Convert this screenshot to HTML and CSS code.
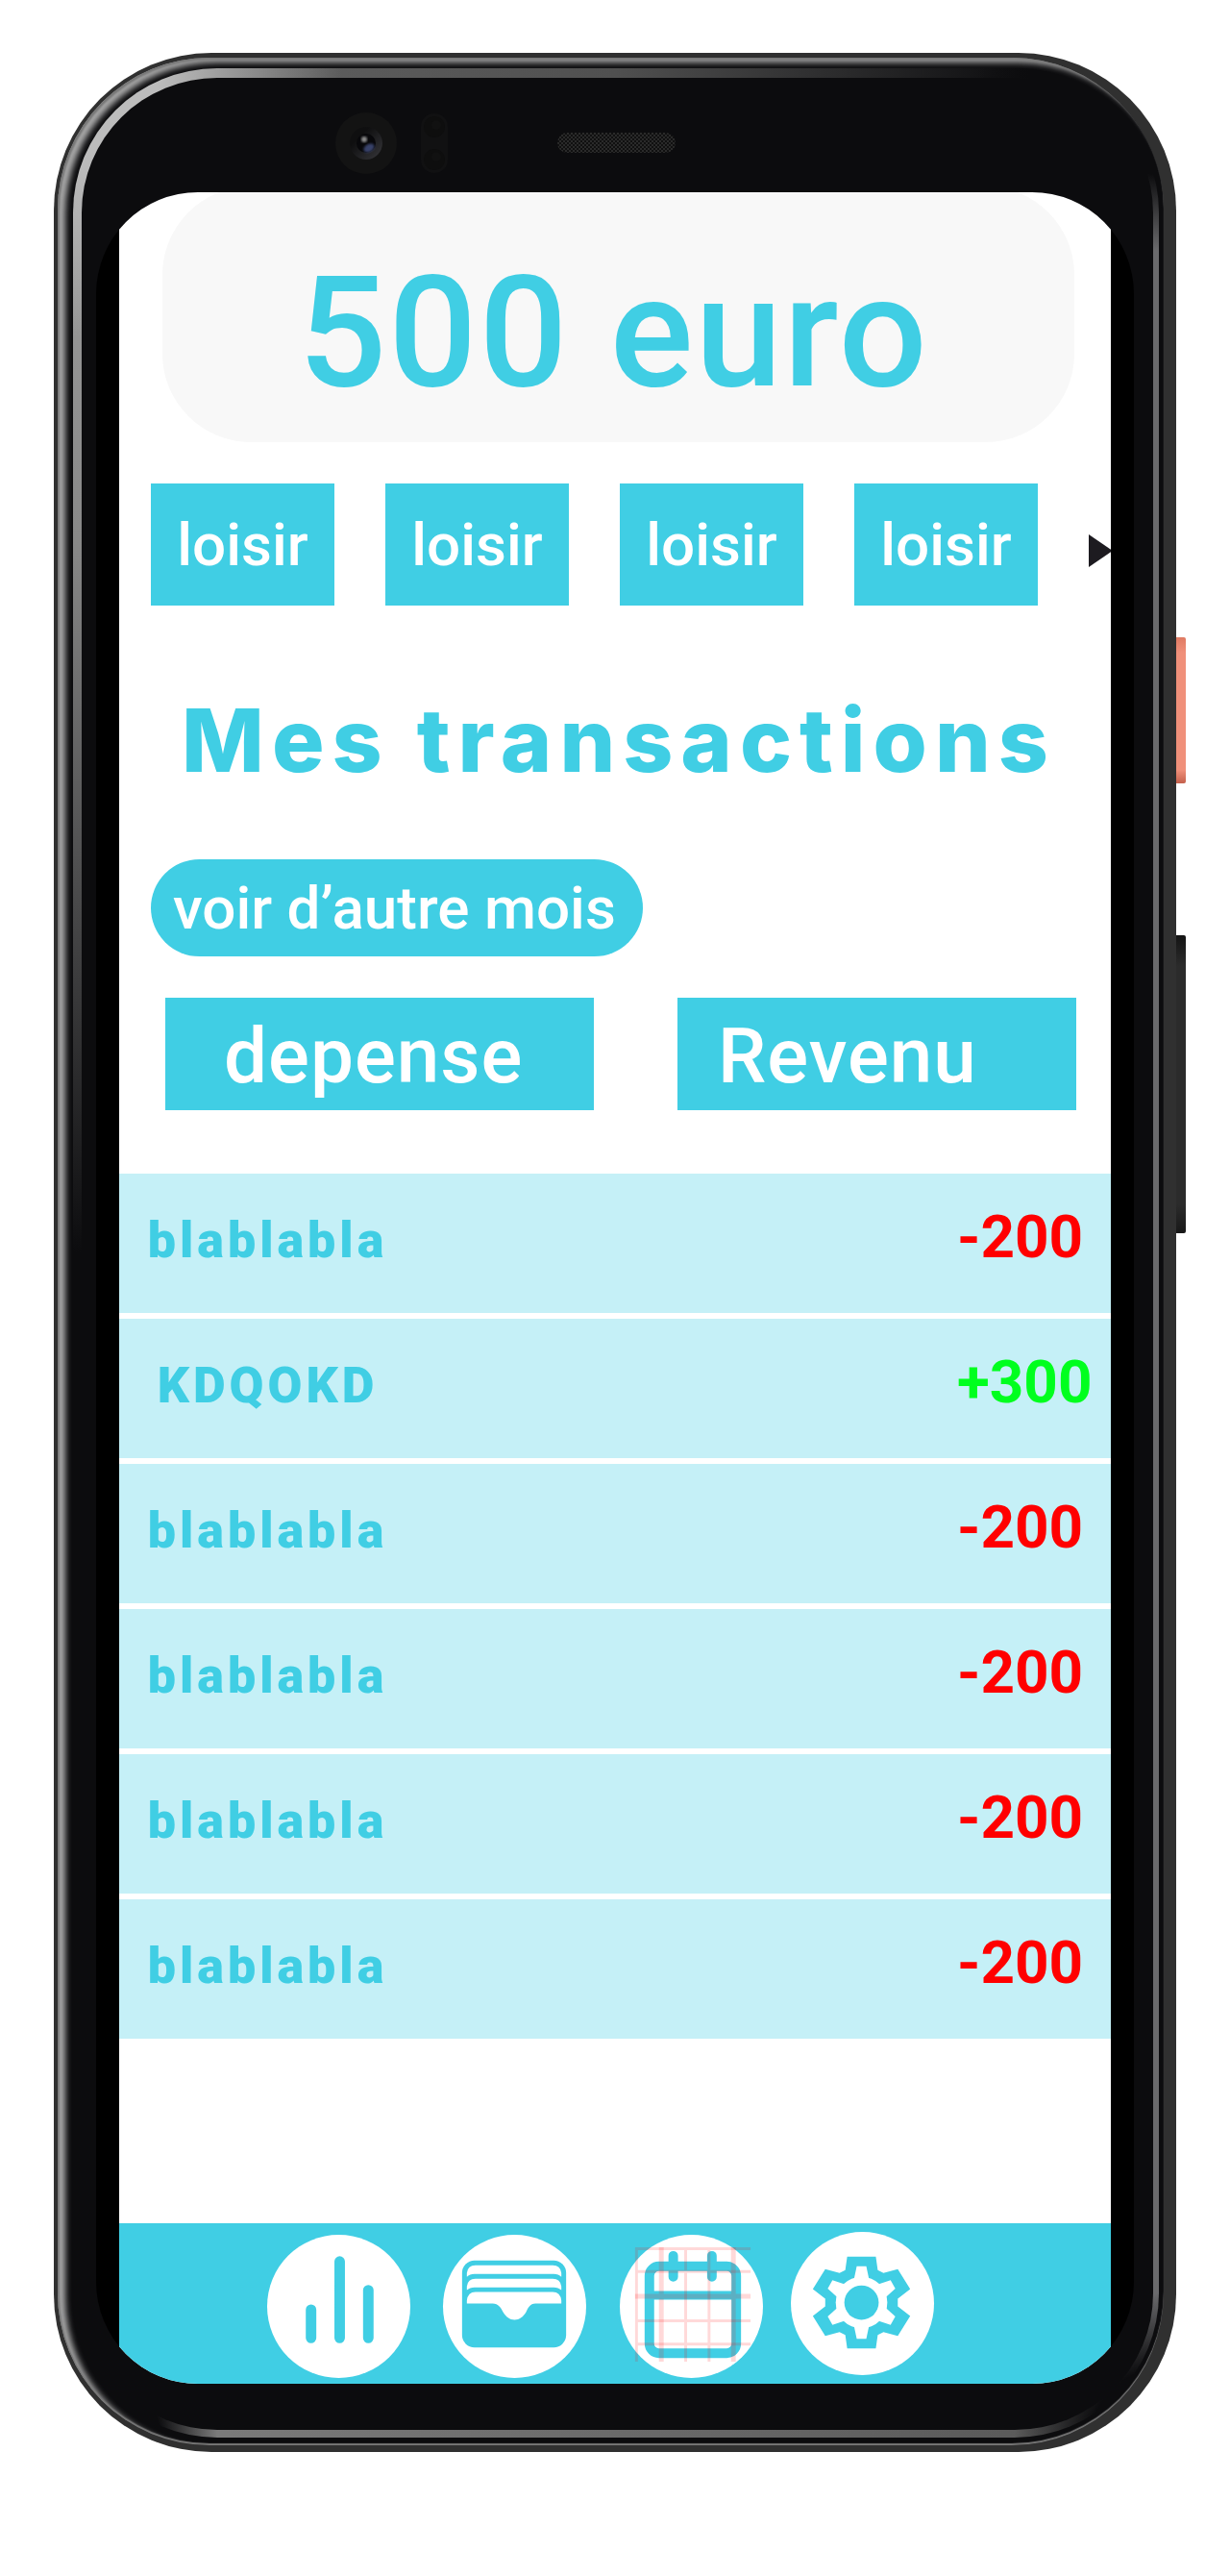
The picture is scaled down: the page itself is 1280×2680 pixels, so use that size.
FILE: index.html
```html
<!DOCTYPE html>
<html lang="fr">
<head>
  <meta charset="utf-8">
  <meta name="viewport" content="width=device-width, initial-scale=1">
  <title>Mes transactions</title>
  <link rel="stylesheet" href="styles.css">
</head>
<body>
  <div class="phone">
    <span class="side-button side-button--power"></span>
    <span class="side-button side-button--volume"></span>
    <div class="rim">
      <div class="face">
        <div class="sensors">
          <div class="sensors__left">
            <svg width="64" height="64" viewBox="0 0 64 64" aria-hidden="true">
              <defs>
                <linearGradient id="lens" x1="0" y1="0" x2="1" y2="1">
                  <stop offset=".3" stop-color="#0f0f10"/>
                  <stop offset="1" stop-color="#38383c"/>
                </linearGradient>
                <filter id="soft"><feGaussianBlur stdDeviation="1"/></filter>
              </defs>
              <circle cx="32" cy="32" r="32" fill="#131313"/>
              <circle cx="32" cy="32" r="17" fill="url(#lens)"/>
              <circle cx="32" cy="32" r="10" fill="#08080b"/>
              <ellipse cx="35" cy="37" rx="6" ry="4" fill="#39436a" filter="url(#soft)" transform="rotate(-30 35 37)"/>
              <circle cx="30" cy="28" r="3" fill="#8a8a8a" filter="url(#soft)"/>
            </svg>
            <svg width="28" height="62" viewBox="0 0 28 62" aria-hidden="true">
              <rect width="28" height="62" rx="14" fill="#111112"/>
              <circle cx="14" cy="14" r="11" fill="#0e0e0e"/>
              <circle cx="14" cy="48" r="11" fill="#0e0e0e"/>
              <circle cx="16" cy="12" r="5" fill="#111"/>
              <circle cx="16" cy="45" r="5" fill="#111"/>
            </svg>
          </div>
          <div class="speaker"></div>
        </div>
        <div class="screen">
          <div class="app">
            <p class="balance">500 euro</p>

            <div class="categories">
              <button class="chip" type="button">loisir</button>
              <button class="chip" type="button">loisir</button>
              <button class="chip" type="button">loisir</button>
              <button class="chip" type="button">loisir</button>
              <button class="next" type="button" aria-label="Suivant">
                <svg width="23" height="34" viewBox="0 0 23 34" aria-hidden="true"><path d="M0 0 25 17 0 34z" fill="#1d1b20"/></svg>
              </button>
            </div>

            <h1 class="title">Mes transactions</h1>

            <button class="months" type="button">voir d’autre mois</button>

            <div class="filters">
              <button class="filter filter--expense" type="button">depense</button>
              <button class="filter filter--income" type="button">Revenu</button>
            </div>

            <table class="transactions">
              <tbody>
                <tr><th scope="row">blablabla</th><td><span class="amount">-200</span></td></tr>
                <tr><th scope="row">KDQOKD</th><td><span class="amount amount--in">+300</span></td></tr>
                <tr><th scope="row">blablabla</th><td><span class="amount">-200</span></td></tr>
                <tr><th scope="row">blablabla</th><td><span class="amount">-200</span></td></tr>
                <tr><th scope="row">blablabla</th><td><span class="amount">-200</span></td></tr>
                <tr><th scope="row">blablabla</th><td><span class="amount">-200</span></td></tr>
              </tbody>
            </table>

            <nav class="tabbar">
              <a class="tab" href="#stats" aria-label="Statistiques">
                <svg viewBox="0 0 150 150" aria-hidden="true">
                  <circle cx="75" cy="75" r="75" fill="#fff"/>
                  <path d="M46 78.500V108M76 28v80M106 58v50" fill="none" stroke="#40cee4" stroke-width="11" stroke-linecap="round"/>
                </svg>
              </a>
              <a class="tab" href="#portefeuille" aria-label="Portefeuille">
                <svg viewBox="0 0 150 150" aria-hidden="true">
                  <circle cx="75" cy="75" r="75" fill="#fff"/>
                  <rect x="20" y="27" width="109" height="91" rx="13" fill="#40cee4"/>
                  <g fill="#fff">
                    <path d="M25 44v-4q1-8 9-8h81q8 0 9 8v4q-3-3-8-3H33q-5 0-8 3z"/>
                    <path d="M25 58v-4q1-8 9-8h81q8 0 9 8v4q-3-3-8-3H33q-5 0-8 3z"/>
                    <path d="M25 72v-3q1-9 9-9h81q8 0 9 9v3H97c-6 0-8 5-10 9-3 5-7 8-12 8s-9-3-12-8c-2-4-5-9-11-9z"/>
                  </g>
                </svg>
              </a>
              <a class="tab" href="#calendrier" aria-label="Calendrier">
                <svg viewBox="0 0 150 150" aria-hidden="true">
                  <circle cx="76" cy="75" r="75" fill="#fff"/>
                  <g transform="translate(2 0)" fill="none">
                    <g stroke="#40cee4" stroke-width="10">
                      <rect x="30" y="33" width="91" height="91" rx="10"/>
                      <path d="M30 63.500h91" stroke-width="9"/>
                      <path d="M55 22v22M95.500 22v22" stroke-linecap="round"/>
                    </g>
                    <g stroke="#f00" stroke-opacity=".15" stroke-width="3">
                      <path d="M15 14.500h121M15 38.500h121M15 90h121M15 114.500h121M16.500 13v120M68 13v120M92.500 13v120"/>
                      <path d="M15 64.500h121M42.500 13v120M118 13v120" stroke-width="5"/>
                    </g>
                  </g>
                </svg>
              </a>
              <a class="tab" href="#reglages" aria-label="Réglages">
                <svg viewBox="0 0 150 150" aria-hidden="true">
                  <circle cx="71" cy="72" r="75" fill="#fff"/>
                  <g transform="translate(70 71)">
                    <path fill="#40cee4" d="M-15-48H15L17-34 23-31 38-35 51-14 38-4V4L51 14 38 35 23 31 17 34 15 48H-15L-17 34-23 31-38 35-51 14-38 4V-4L-51-14-38-35-23-31-17-34z"/>
                    <circle r="27" fill="#fff"/>
                    <g fill="#fff">
                      <path id="tooth" d="M-8-24-5-38H5L8-24z"/>
                      <use href="#tooth" transform="rotate(60)"/>
                      <use href="#tooth" transform="rotate(120)"/>
                      <use href="#tooth" transform="rotate(180)"/>
                      <use href="#tooth" transform="rotate(240)"/>
                      <use href="#tooth" transform="rotate(300)"/>
                    </g>
                    <circle r="18" fill="#40cee4"/>
                  </g>
                </svg>
              </a>
            </nav>
          </div>
        </div>
      </div>
    </div>
  </div>
</body>
</html>
```

FILE: styles.css
```css
:root {
  --accent: #40cee4;
  --accent-soft: #c5f0f7;
  --body: #0c0c0e;
}

* {
  box-sizing: border-box;
}

body {
  margin: 0;
  background: #fff;
  font-family: Roboto, "Liberation Sans", sans-serif;
}

button {
  border: 0;
  padding: 0;
  background: var(--accent);
  color: #fff;
  font: inherit;
  cursor: pointer;
}

/* Phone body */

.phone {
  position: relative;
  margin: 55px 56px;
  padding: 5px 13px 7px 4px;
  border-radius: 164px;
  background: #303030;
}

.side-button {
  position: absolute;
  left: 100%;
  width: 10px;
  border-radius: 0 2px 2px 0;
}

.side-button--power {
  top: 608px;
  height: 152px;
  background: linear-gradient(#df7a62, #f0907a 16px, #f0907a 138px, #c4604c);
}

.side-button--volume {
  top: 918px;
  height: 310px;
  background: linear-gradient(#141414, #2b2b2b 32px, #2b2b2b 280px, #181818);
}

.rim {
  padding: 11px 5px 8px 16px;
  border-radius: 158px;
  background: var(--body);
  box-shadow:
    inset 0 -2px 1px #777,
    inset 2px 2px 2px #777,
    inset 8px 5px 6px #aaa;
}

/* The gradients below show only through the transparent border. */
.face {
  padding: 0 20px 48px 15px;
  border: solid transparent;
  border-width: 10px 6px 8px 9px;
  border-radius: 150px;
  background:
    linear-gradient(var(--body), var(--body)) padding-box,
    radial-gradient(circle at 100% 0, var(--body) 110px, transparent 190px) border-box,
    radial-gradient(circle at 100% 100%, var(--body) 70px, transparent 150px) border-box,
    radial-gradient(circle at 0 100%, var(--body) 90px, transparent 150px) border-box,
    radial-gradient(circle at 0 0, #bcbcbc 90px, transparent 280px) border-box,
    linear-gradient(#a4a4a4, #888 20%, var(--body) 50%) left / 60px 100% no-repeat border-box,
    linear-gradient(90deg, #666, #505050 50%, var(--body) 88%) top / 100% 60px no-repeat border-box,
    linear-gradient(90deg, #808080, #555) bottom / 100% 60px no-repeat border-box,
    linear-gradient(#6a6a6c, #6a6a6c) border-box;
}

.sensors {
  display: grid;
  grid-template-columns: 1fr auto 1fr;
  align-items: center;
  height: 119px;
  padding: 16px 0 0 2px;
}

.sensors__left {
  display: flex;
  align-items: center;
  justify-content: flex-end;
  gap: 25px;
  padding-right: 114px;
}

.speaker {
  width: 123px;
  height: 21px;
  border-radius: 11px;
  background: repeating-conic-gradient(#2a2a2a 0 25%, #101010 0 50%) 0 0 / 4px 4px;
}

.screen {
  padding: 0 24px;
  overflow: hidden;
  border-radius: 106px;
  background: #000;
}

/* App */

.app {
  overflow: hidden;
  background: #fff;
}

.balance {
  margin: -6px 38px 0 45px;
  padding: 54px 10px 16px 0;
  border-radius: 92px;
  background: #f8f8f8;
  color: var(--accent);
  font-size: 162px;
  font-weight: 500;
  line-height: 196px;
  letter-spacing: 2px;
  text-align: center;
}

.categories {
  display: grid;
  grid-template-columns: repeat(4, 1fr) 23px;
  gap: 53px;
  margin-top: 43px;
  padding-left: 33px;
}

.chip {
  height: 127px;
  font-size: 62px;
  font-weight: 500;
}

.next {
  display: flex;
  align-items: center;
  padding-top: 12px;
  background: none;
}

.title {
  margin: 84px 0 0;
  padding-left: 8px;
  color: var(--accent);
  font-family: Inter, Roboto, sans-serif;
  font-size: 91px;
  font-weight: 800;
  line-height: 112px;
  letter-spacing: 8px;
  text-align: center;
  white-space: nowrap;
}

.months {
  display: block;
  height: 101px;
  margin: 68px 0 0 33px;
  padding: 0 28px 0 23px;
  border-radius: 51px;
  font-size: 62px;
  font-weight: 500;
}

.filters {
  display: grid;
  grid-template-columns: 446fr 415fr;
  gap: 87px;
  margin-top: 43px;
  padding: 0 36px 0 48px;
}

.filter {
  height: 117px;
  padding-top: 4px;
  font-size: 80px;
  font-weight: 500;
  line-height: 96px;
  letter-spacing: 1px;
  text-align: left;
}

.filter--expense {
  padding-left: 61px;
}

.filter--income {
  padding-left: 42px;
}

.transactions {
  width: 100%;
  margin-top: 60px;
  border-spacing: 0 6px;
  table-layout: fixed;
}

.transactions th,
.transactions td {
  height: 145px;
  background: var(--accent-soft);
}

.transactions th {
  width: 306px;
  padding: 0 0 6px 3px;
  color: var(--accent);
  font-size: 52px;
  font-weight: 900;
  letter-spacing: 4px;
  text-align: center;
}

.transactions td {
  padding: 0 0 14px;
  text-align: right;
}

.amount {
  display: inline-block;
  width: 160px;
  color: #f00;
  font-size: 62px;
  font-weight: 700;
  text-align: left;
}

.amount--in {
  color: #00ff1e;
}

.tabbar {
  display: flex;
  gap: 34px;
  margin-top: 186px;
  padding: 12px 0 6px 154px;
  background: var(--accent);
}

.tab {
  width: 149px;
  height: 149px;
}

.tab svg {
  display: block;
  width: 100%;
  height: 100%;
  overflow: visible;
}
```
